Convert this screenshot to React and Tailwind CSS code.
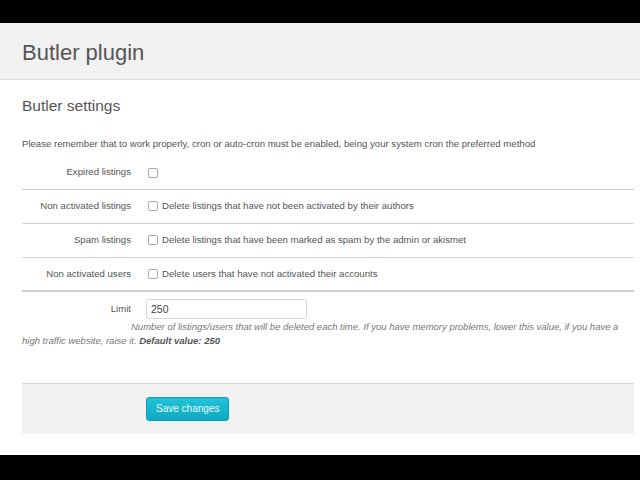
import React, { useState } from 'react';

const rows = [
  { label: 'Expired listings', text: '' },
  { label: 'Non activated listings', text: 'Delete listings that have not been activated by their authors' },
  { label: 'Spam listings', text: 'Delete listings that have been marked as spam by the admin or akismet' },
  { label: 'Non activated users', text: 'Delete users that have not activated their accounts' },
];

const Checkbox = ({ checked, onChange }) => (
  <span
    onClick={onChange}
    className={`inline-block w-[10px] h-[10px] rounded-[2px] border border-[#a9a9a9] bg-white shrink-0 ${checked ? 'bg-[#1bb4cc]' : ''}`}
  />
);

const App = () => {
  const [checks, setChecks] = useState([false, false, false, false]);
  const [limit, setLimit] = useState('250');

  const toggle = (i) => {
    const next = [...checks];
    next[i] = !next[i];
    setChecks(next);
  };

  return (
    <div
      className="h-[480px] bg-black flex flex-col text-[#555]"
      style={{ fontFamily: '"Liberation Sans", Arial, sans-serif' }}
    >
      <div className="h-[23px]" />
      <div className="h-[432px] bg-white flex flex-col">
        {/* Header */}
        <div className="h-[57px] bg-[#f1f1f1] border-b border-[#dcdcdc] flex items-center px-[22px]">
          <h1 className="text-[22px] text-[#555] pt-[2px]">Butler plugin</h1>
        </div>

        <div className="ml-[22px] mr-[6px] flex flex-col">
          <h2 className="text-[15.5px] text-[#555] mt-[16px] leading-[20px]">Butler settings</h2>
          <p className="text-[9.6px] leading-[12px] mt-[22px]">
            Please remember that to work properly, cron or auto-cron must be enabled, being your system cron the preferred method
          </p>

          {/* Options */}
          <div className="mt-[6px] flex flex-col">
            {rows.map((row, i) => (
              <div
                key={row.label}
                className={`h-[34px] flex items-center text-[9.6px] ${i === rows.length - 1 ? 'border-b-2' : 'border-b'} border-[#cfcfcf]`}
              >
                <span className="w-[109px] text-right">{row.label}</span>
                <span className="pl-[17px] flex items-center gap-[4px]">
                  <Checkbox checked={checks[i]} onChange={() => toggle(i)} />
                  {row.text && <span>{row.text}</span>}
                </span>
              </div>
            ))}
          </div>

          {/* Limit */}
          <div className="mt-[7px] flex items-center text-[9.6px]">
            <span className="w-[109px] text-right">Limit</span>
            <input
              value={limit}
              onChange={(e) => setLimit(e.target.value)}
              className="ml-[15px] w-[161px] h-[20px] border border-[#d8d8d8] rounded-[2px] px-[4px] text-[10.5px] text-[#444] outline-none"
            />
          </div>
          <p className="text-[9.5px] leading-[14px] italic text-[#777] indent-[109px] mt-[1px]">
            Number of listings/users that will be deleted each time. If you have memory problems, lower this value, if you have a high traffic website, raise it.{' '}
            <b className="text-[#555]">Default value: 250</b>
          </p>

          {/* Footer */}
          <div className="mt-[35px] h-[51px] bg-[#f1f1f1] border-t border-[#d0d0d0] pl-[124px] pt-[11px]">
            <button className="h-[24px] px-[9px] rounded-[3px] border border-[#0e9fb5] bg-gradient-to-b from-[#22c3da] to-[#0ea9c1] text-white/90 text-[10px]">
              Save changes
            </button>
          </div>
        </div>
      </div>
    </div>
  );
};

export default App;
